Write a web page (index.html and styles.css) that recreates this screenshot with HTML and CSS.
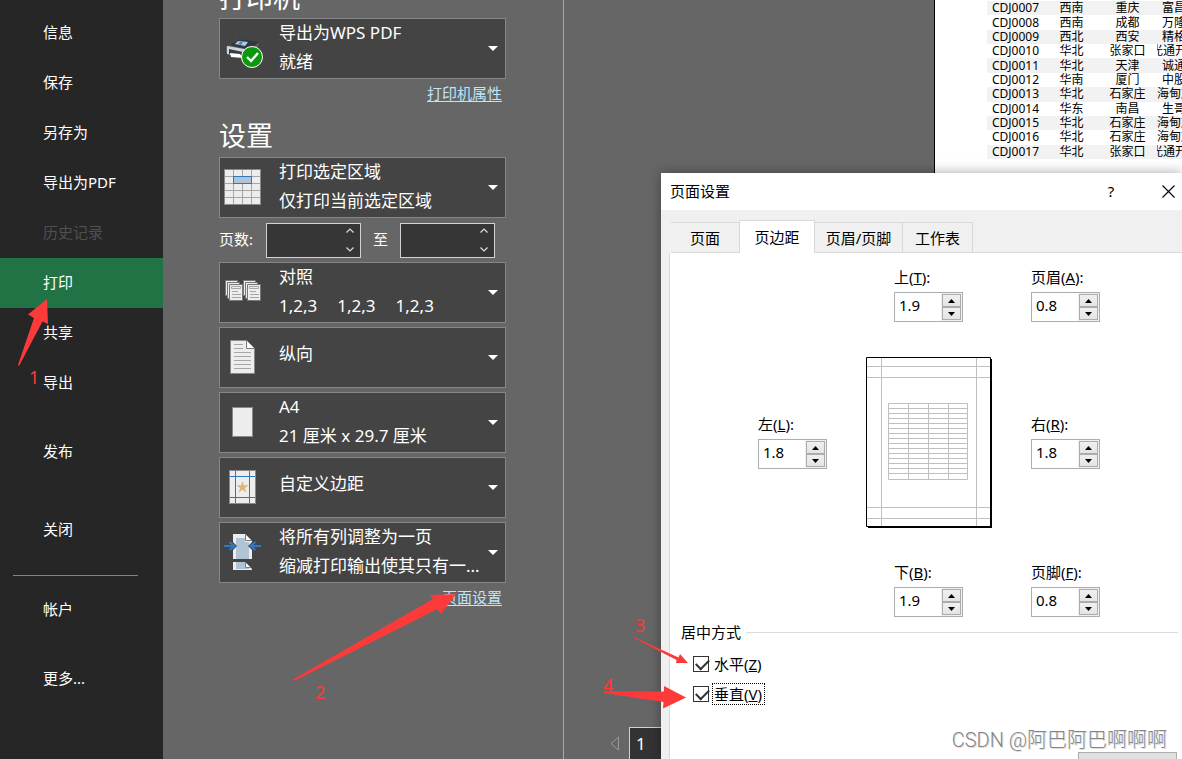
FILE: index.html
```html
<!DOCTYPE html>
<html lang="zh-CN">
<head>
<meta charset="utf-8">
<title>打印</title>
<link rel="stylesheet" href="styles.css">
</head>
<body>
<div class="app">
  <nav class="menu">
    <a class="menu-item" href="#info">信息</a>
    <a class="menu-item" href="#save">保存</a>
    <a class="menu-item" href="#save-as">另存为</a>
    <a class="menu-item" href="#pdf">导出为PDF</a>
    <a class="menu-item menu-disabled" aria-disabled="true" href="#history">历史记录</a>
    <a class="menu-item menu-active" aria-current="page" href="#print">打印</a>
    <a class="menu-item" href="#share">共享</a>
    <a class="menu-item" href="#export">导出</a>
    <a class="menu-item menu-publish" href="#publish">发布</a>
    <a class="menu-item menu-close" href="#close">关闭</a>
    <hr class="menu-rule">
    <a class="menu-item menu-account" href="#account">帐户</a>
    <a class="menu-item menu-more" href="#more">更多...</a>
  </nav>

  <main class="settings">
    <h2 class="heading heading-printer">打印机</h2>
    <button class="picker" type="button" aria-haspopup="listbox">
      <svg class="picker-icon" viewBox="0 0 40 39">
        <path d="M3 18 15 10 36 14 33 24 26 30 3 24z" fill="#5b6064"/>
        <path d="M6 16 16 10 36 13 27 21z" fill="#34383c"/>
        <path d="M15 12 25 13 22 17 12 15z" fill="#a9cdf0"/>
        <path d="M17 13 20 13 18 16 15 15z" fill="#4f82bd"/>
        <path d="M4 17 27 21 27 29 4 25z" fill="#d3d6d9"/>
        <path d="M6 20 20 23 20 27 6 25z" fill="#3a3d40"/>
        <path d="M7 24 17 25 20 29 8 28z" fill="#fff"/>
        <circle cx="29" cy="28" r="10.5" fill="#0b980f" stroke="#fff"/>
        <path d="M24 28 28 32 35 24" fill="none" stroke="#fff" stroke-width="2.4"/>
      </svg>
      <span class="picker-text"><span>导出为WPS PDF</span><span>就绪</span></span>
      <svg class="caret" viewBox="0 0 10 5"><path d="M0 0h10L5 5z" fill="#fff"/></svg>
    </button>
    <a class="link" href="#printer-props">打印机属性</a>

    <h2 class="heading">设置</h2>
    <div class="options">
      <button class="picker" type="button" aria-haspopup="listbox">
        <svg class="picker-icon" viewBox="0 0 40 39">
          <rect x="1.5" y="1.5" width="36" height="35" fill="#ededed" stroke="#8a8a8a"/>
          <path d="M10.5 2v34M19.5 2v34M28.5 2v34M2 8.5h35M2 15.5h35M2 22.5h35M2 29.5h35" fill="none" stroke="#a6a6a6"/>
          <rect x="10.5" y="8.5" width="18" height="7" fill="#b1c4d6" stroke="#2f77c0"/>
        </svg>
        <span class="picker-text"><span>打印选定区域</span><span>仅打印当前选定区域</span></span>
        <svg class="caret" viewBox="0 0 10 5"><path d="M0 0h10L5 5z" fill="#fff"/></svg>
      </button>

      <div class="pages">
        <label class="pages-label" for="from">页数:</label>
        <div class="dark-spin">
          <input id="from" type="text">
          <svg viewBox="0 0 8 24"><path d="M.5 4.5 4 1l3.500 3.500M.5 19.500 4 23l3.500-3.500" fill="none" stroke="#ddd" stroke-width="1.200"/></svg>
        </div>
        <label class="pages-to" for="to">至</label>
        <div class="dark-spin">
          <input id="to" type="text">
          <svg viewBox="0 0 8 24"><path d="M.5 4.5 4 1l3.500 3.500M.5 19.500 4 23l3.500-3.500" fill="none" stroke="#ddd" stroke-width="1.200"/></svg>
        </div>
      </div>

      <button class="picker" type="button" aria-haspopup="listbox">
        <svg class="picker-icon" viewBox="0 0 40 39">
          <g fill="#ededed" stroke="#777">
            <path d="M2.500 7.500h12v15h-12z"/><path d="M4.500 9.500h12v16h-12z"/><path d="M6.500 11.500h13v16h-13z"/>
            <path d="M20.500 7.500h12v15h-12z"/><path d="M22.500 9.500h12v16h-12z"/><path d="M24.500 11.500h13v16h-13z"/>
          </g>
          <path d="M8.500 13.500h9v2h-9zM26.500 13.500h9v2h-9zM9 18.500h6M9 21.500h9M9 24.500h9M27 18.500h6M27 21.500h9M27 24.500h9" fill="none" stroke="#a6a6a6"/>
        </svg>
        <span class="picker-text"><span>对照</span><span class="sets"><span>1,2,3</span><span>1,2,3</span><span>1,2,3</span></span></span>
        <svg class="caret" viewBox="0 0 10 5"><path d="M0 0h10L5 5z" fill="#fff"/></svg>
      </button>

      <button class="picker" type="button" aria-haspopup="listbox">
        <svg class="picker-icon" viewBox="0 0 40 39">
          <path d="M7.500 2.500h16l8 8v25h-24z" fill="#ededed" stroke="#8a8a8a"/>
          <path d="M23.500 2.500v8h8" fill="#fff" stroke="#777"/>
          <path d="M11 6.500h9M11 10.500h9M11 14.500h17M11 18.500h17M11 22.500h17M11 26.500h17M11 30.500h17" stroke="#a6a6a6"/>
        </svg>
        <span class="picker-text picker-single"><span>纵向</span></span>
        <svg class="caret" viewBox="0 0 10 5"><path d="M0 0h10L5 5z" fill="#fff"/></svg>
      </button>

      <button class="picker" type="button" aria-haspopup="listbox">
        <svg class="picker-icon" viewBox="0 0 40 39"><rect x="9.500" y="4.500" width="20" height="29" fill="#ededed" stroke="#8a8a8a"/></svg>
        <span class="picker-text"><span>A4</span><span>21 厘米 x 29.7 厘米</span></span>
        <svg class="caret" viewBox="0 0 10 5"><path d="M0 0h10L5 5z" fill="#fff"/></svg>
      </button>

      <button class="picker" type="button" aria-haspopup="listbox">
        <svg class="picker-icon" viewBox="0 0 40 39">
          <rect x="6.500" y="2.500" width="26" height="33" fill="#ededed" stroke="#8a8a8a"/>
          <path d="M12.500 3v32M26.500 3v32M7 8.500h25M7 29.500h25" stroke="#2f77c0"/>
          <path d="m19.500 13 1.500 4.300h4.500l-3.600 2.700 1.400 4.500-3.800-2.700-3.800 2.700 1.400-4.500-3.600-2.700h4.500z" fill="#deb679"/>
        </svg>
        <span class="picker-text picker-single"><span>自定义边距</span></span>
        <svg class="caret" viewBox="0 0 10 5"><path d="M0 0h10L5 5z" fill="#fff"/></svg>
      </button>

      <button class="picker" type="button" aria-haspopup="listbox">
        <svg class="picker-icon" viewBox="0 0 40 39">
          <path d="M10 1h12l7 7v18H10z" fill="#ededed"/>
          <path d="M13 5h9v4h4v17H13z" fill="#b1c4d6"/>
          <path d="M22.500 1.500v6h6" fill="#fff" stroke="#777"/>
          <path d="M10 29h12l7 7v1H10z" fill="#ededed"/>
          <path d="M13 29h9v6h4v1H13z" fill="#b1c4d6"/>
          <path d="M22.500 29.500v5h5" fill="#fff" stroke="#777"/>
          <path d="M9 8l5 5-5 5zM30 8l-5 5 5 5z" fill="#444"/>
          <path d="M1 13h10M6.500 9l5 4-5 4M38 13H28M32.500 9l-5 4 5 4" fill="none" stroke="#3079c4" stroke-width="2"/>
        </svg>
        <span class="picker-text"><span>将所有列调整为一页</span><span>缩减打印输出使其只有一...</span></span>
        <svg class="caret" viewBox="0 0 10 5"><path d="M0 0h10L5 5z" fill="#fff"/></svg>
      </button>
    </div>
    <a class="link" href="#page-setup">页面设置</a>
  </main>

  <section class="preview">
    <div class="sheet">
      <table class="rows">
        <colgroup><col class="col-code"><col class="col-area"><col class="col-city"><col></colgroup>
        <tbody>
          <tr><td>CDJ0007</td><td>西南</td><td>重庆</td><td class="name name-short">富昌</td></tr>
          <tr><td>CDJ0008</td><td>西南</td><td>成都</td><td class="name name-short">万隆</td></tr>
          <tr><td>CDJ0009</td><td>西北</td><td>西安</td><td class="name name-short">精格</td></tr>
          <tr><td>CDJ0010</td><td>华北</td><td>张家口</td><td class="name name-long">光通开</td></tr>
          <tr><td>CDJ0011</td><td>华北</td><td>天津</td><td class="name name-short">诚通</td></tr>
          <tr><td>CDJ0012</td><td>华南</td><td>厦门</td><td class="name name-short">中股</td></tr>
          <tr><td>CDJ0013</td><td>华北</td><td>石家庄</td><td class="name">海甸旅</td></tr>
          <tr><td>CDJ0014</td><td>华东</td><td>南昌</td><td class="name name-short">生哥</td></tr>
          <tr><td>CDJ0015</td><td>华北</td><td>石家庄</td><td class="name">海甸旅</td></tr>
          <tr><td>CDJ0016</td><td>华北</td><td>石家庄</td><td class="name">海甸旅</td></tr>
          <tr><td>CDJ0017</td><td>华北</td><td>张家口</td><td class="name name-long">光通开</td></tr>
        </tbody>
      </table>
    </div>
    <div class="pager">
      <button class="pager-prev" type="button" aria-label="上一页"><svg viewBox="0 0 9 15"><path d="M8.500 1v13L1 7.500z" fill="none" stroke="#999"/></svg></button>
      <input class="pager-page" type="text" aria-label="当前页" value="1">
    </div>

    <div class="dialog" role="dialog" aria-labelledby="dialog-title">
      <header class="titlebar">
        <h1 class="title" id="dialog-title">页面设置</h1>
        <button class="title-button" type="button">?</button>
        <button class="title-button" type="button" aria-label="关闭"><svg viewBox="0 0 13 13"><path d="M.5.5l12 12M12.500.5l-12 12" stroke="#000" stroke-width="1.100"/></svg></button>
      </header>
      <div class="tabs" role="tablist">
        <button class="tab tab-page" type="button" role="tab">页面</button>
        <button class="tab tab-active" type="button" role="tab" aria-selected="true">页边距</button>
        <button class="tab tab-header" type="button" role="tab">页眉/页脚</button>
        <button class="tab tab-sheet" type="button" role="tab">工作表</button>
      </div>
      <div class="panel">
        <div class="margins">
          <div class="field at-top"><label for="top">上(<u>T</u>):</label>
            <div class="spin"><input id="top" type="text" value="1.9"><span class="steps"><button type="button" aria-label="增加"><svg viewBox="0 0 7 4"><path d="M0 4h7L3.500 0z"/></svg></button><button type="button" aria-label="减少"><svg viewBox="0 0 7 4"><path d="M0 0h7L3.500 4z"/></svg></button></span></div></div>
          <div class="field at-header"><label for="header">页眉(<u>A</u>):</label>
            <div class="spin"><input id="header" type="text" value="0.8"><span class="steps"><button type="button" aria-label="增加"><svg viewBox="0 0 7 4"><path d="M0 4h7L3.500 0z"/></svg></button><button type="button" aria-label="减少"><svg viewBox="0 0 7 4"><path d="M0 0h7L3.500 4z"/></svg></button></span></div></div>
          <div class="field at-left"><label for="left">左(<u>L</u>):</label>
            <div class="spin"><input id="left" type="text" value="1.8"><span class="steps"><button type="button" aria-label="增加"><svg viewBox="0 0 7 4"><path d="M0 4h7L3.500 0z"/></svg></button><button type="button" aria-label="减少"><svg viewBox="0 0 7 4"><path d="M0 0h7L3.500 4z"/></svg></button></span></div></div>
          <svg class="page-sketch" viewBox="0 0 126 171">
            <path d="M2 2h124v169H2z"/>
            <path d="M.5.5h124v169H.5z" fill="#fff" stroke="#000"/>
            <path d="M15.500 1v168M110.500 1v168M1 9.500h123M1 20.500h123M1 150.500h123M1 161.500h123" stroke="#bfbfbf"/>
            <path d="M22.500 46.500h79v76h-79zM42.500 46v76M62.500 46v76M82.500 46v76M22 51.500h80M22 56.500h80M22 61.500h80M22 66.500h80M22 71.500h80M22 76.500h80M22 81.500h80M22 86.500h80M22 91.500h80M22 96.500h80M22 101.500h80M22 106.500h80M22 111.500h80M22 116.500h80" fill="none" stroke="#bfbfbf"/>
          </svg>
          <div class="field at-right"><label for="right">右(<u>R</u>):</label>
            <div class="spin"><input id="right" type="text" value="1.8"><span class="steps"><button type="button" aria-label="增加"><svg viewBox="0 0 7 4"><path d="M0 4h7L3.500 0z"/></svg></button><button type="button" aria-label="减少"><svg viewBox="0 0 7 4"><path d="M0 0h7L3.500 4z"/></svg></button></span></div></div>
          <div class="field at-bottom"><label for="bottom">下(<u>B</u>):</label>
            <div class="spin"><input id="bottom" type="text" value="1.9"><span class="steps"><button type="button" aria-label="增加"><svg viewBox="0 0 7 4"><path d="M0 4h7L3.500 0z"/></svg></button><button type="button" aria-label="减少"><svg viewBox="0 0 7 4"><path d="M0 0h7L3.500 4z"/></svg></button></span></div></div>
          <div class="field at-footer"><label for="footer">页脚(<u>F</u>):</label>
            <div class="spin"><input id="footer" type="text" value="0.8"><span class="steps"><button type="button" aria-label="增加"><svg viewBox="0 0 7 4"><path d="M0 4h7L3.500 0z"/></svg></button><button type="button" aria-label="减少"><svg viewBox="0 0 7 4"><path d="M0 0h7L3.500 4z"/></svg></button></span></div></div>
        </div>
        <div class="group" role="group" aria-labelledby="center-title">
          <div class="group-title" id="center-title">居中方式</div>
          <div class="check"><input id="horizontal" type="checkbox" checked><label for="horizontal">水平(<u>Z</u>)</label></div>
          <div class="check"><input id="vertical" type="checkbox" checked><label class="focused" for="vertical">垂直(<u>V</u>)</label></div>
        </div>
        <button class="dialog-button" type="button" aria-label="选项"></button>
      </div>
    </div>
  </section>

  <svg class="notes">
    <path d="M47 299 28 314.500 34 318 18 365 19 366 42.500 321.500 48 324z"/>
    <path d="M456 594 430 595 433 599 293 679.500 294 681 437.500 609 441 614z"/>
    <path d="M688 663 680 654 678.500 657.500 634 637 634 638 676.500 660 676 663z"/>
    <path d="M686 697.500 664 686V691.500L604 691.500V693L663.500 702 663 708.500z"/>
    <text x="29" y="384">1</text>
    <text x="315" y="699">2</text>
    <text x="635" y="632">3</text>
    <text x="603" y="692">4</text>
  </svg>
  <div class="watermark">CSDN @阿巴阿巴啊啊啊</div>
</div>
</body>
</html>
```

FILE: styles.css
```css
* {
  box-sizing: border-box;
}

body {
  margin: 0;
  font-family: "Noto Sans", "Noto Sans CJK SC", sans-serif;
  font-size: 15px;
  line-height: 20px;
}

button,
input {
  margin: 0;
  padding: 0;
  font: inherit;
  color: inherit;
}

svg {
  display: block;
}

.app {
  position: relative;
  display: grid;
  grid-template-columns: 163px 401px 1fr;
  height: 100vh;
  overflow: hidden;
  background: #666;
  color: #fff;
}

/* Left menu */

.menu {
  display: flex;
  flex-direction: column;
  padding-top: 8px;
  background: #262626;
}

.menu-item {
  flex: none;
  height: 50px;
  padding-left: 43px;
  line-height: 48px;
  color: #fff;
  text-decoration: none;
}

.menu-disabled {
  color: #505050;
}

.menu-active {
  background: #217346;
}

.menu-publish,
.menu-more {
  margin-top: 19px;
}

.menu-close {
  margin-top: 28px;
}

.menu-rule {
  width: 125px;
  height: 1px;
  margin: 20px 0 0 13px;
  border: 0;
  background: #858585;
}

.menu-account {
  margin-top: 9px;
}

/* Print settings */

.settings {
  display: flex;
  flex-direction: column;
  padding: 0 57px 0 56px;
  border-right: 1px solid #a8a8a8;
}

.heading {
  margin: 15px 0 2px;
  font-size: 27px;
  font-weight: 400;
  line-height: 36px;
}

.heading-printer {
  margin-top: -20px;
}

.picker {
  display: flex;
  align-items: center;
  width: 100%;
  height: 61px;
  padding: 0 7px 0 3px;
  border: 1px solid #868686;
  background: #444;
  text-align: left;
}

.picker-icon {
  flex: none;
  width: 40px;
  height: 39px;
}

.picker-text {
  display: flex;
  flex: 1;
  flex-direction: column;
  padding: 0 0 3px 16px;
  font-size: 17px;
  line-height: 29px;
  white-space: nowrap;
}

.picker-single {
  padding-bottom: 8px;
}

.sets {
  display: flex;
  gap: 20px;
}

.caret {
  flex: none;
  width: 10px;
  height: 5px;
}

.link {
  align-self: flex-end;
  margin: 4px 4px 0 0;
  color: #bfe3f8;
  text-underline-offset: 2px;
}

.options {
  display: flex;
  flex-direction: column;
  gap: 4px;
  padding-top: 1px;
}

.pages {
  display: flex;
  align-items: center;
  height: 36px;
}

.pages-label,
.pages-to {
  padding-bottom: 2px;
}

.pages-label {
  width: 47px;
}

.pages-to {
  width: 39px;
  text-align: center;
}

.dark-spin {
  display: flex;
  align-items: center;
  width: 95px;
  height: 35px;
  padding-right: 6px;
  border: 1px solid #d2d2d2;
  background: #363636;
}

.dark-spin input {
  flex: 1;
  min-width: 0;
  height: 100%;
  padding-left: 6px;
  border: 0;
  background: transparent;
}

.dark-spin svg {
  width: 8px;
  height: 24px;
}

/* Preview */

.preview {
  position: relative;
  display: flex;
  flex-direction: column;
  min-width: 0;
}

.sheet {
  flex: 1;
  min-height: 0;
  margin-left: 370px;
  padding: 1px 0 0 52px;
  overflow: hidden;
  border-left: 1px solid #000;
  background: #fff;
  color: #000;
}

.rows {
  width: 100%;
  height: 158px;
  table-layout: fixed;
  border-collapse: collapse;
  font-size: 12px;
  line-height: 14px;
}

.col-code {
  width: 58px;
}

.col-area {
  width: 53px;
}

.col-city {
  width: 59px;
}

.rows td {
  height: 14px;
  padding: 0;
  overflow: hidden;
  text-align: center;
  white-space: nowrap;
}

.rows td:first-child {
  padding-left: 5px;
  text-align: left;
}

.rows .name {
  text-align: left;
}

.rows .name-short {
  padding-left: 5px;
}

.rows .name-long {
  text-indent: -6px;
}

.rows tr:nth-child(odd) {
  background: #f2f2f2;
}

.pager {
  display: flex;
  align-items: center;
  height: 32px;
  padding-left: 46px;
}

.pager-prev {
  width: 19px;
  border: 0;
  background: transparent;
}

.pager-prev svg {
  width: 9px;
  height: 15px;
}

.pager-page {
  width: 60px;
  height: 36px;
  margin-top: 4px;
  padding: 0 0 3px 6px;
  border: 1px solid #d2d2d2;
  background: #333;
  font-size: 17px;
}

/* Page setup dialog */

.dialog {
  position: absolute;
  top: 173px;
  right: 0;
  bottom: 0;
  left: 97px;
  display: flex;
  flex-direction: column;
  background: #f0f0f0;
  color: #000;
  box-shadow: 0 0 12px rgba(0, 0, 0, 0.35);
  overflow: hidden;
}

.titlebar {
  display: flex;
  flex: none;
  align-items: center;
  height: 37px;
  padding-left: 9px;
  background: #fff;
}

.title {
  flex: 1;
  margin: 0;
  padding-bottom: 2px;
  font-size: 15px;
  font-weight: 400;
}

.title-button {
  display: grid;
  place-items: center;
  width: 28px;
  height: 36px;
  border: 0;
  background: transparent;
}

.title-button:nth-of-type(1) {
  margin-right: 29px;
  padding-bottom: 2px;
}

.title-button svg {
  width: 13px;
  height: 13px;
}

.tabs {
  display: flex;
  flex: none;
  align-items: flex-end;
  height: 43px;
  padding-left: 10px;
}

.tab {
  height: 31px;
  border: 1px solid #d9d9d9;
  border-left: 0;
  background: #f0f0f0;
}

.tab-page {
  width: 68px;
  border-right: 0;
}

.tab-active {
  width: 76px;
  height: 33px;
  border: 1px solid #d9d9d9;
  border-bottom: 0;
  background: #fff;
}

.tab-header {
  width: 88px;
}

.tab-sheet {
  width: 70px;
}

.tabs::after {
  flex: 1;
  height: 1px;
  background: #d9d9d9;
  content: "";
}

.panel {
  display: flex;
  flex: 1;
  flex-direction: column;
  min-height: 0;
  margin-left: 8px;
  padding-right: 4px;
  border-left: 1px solid #d9d9d9;
  background: #fff;
}

.margins {
  display: grid;
  flex: none;
  grid-template-columns: 69px 126px 69px;
  gap: 35px 39px;
  align-items: center;
  padding: 15px 0 0 88px;
}

.at-top,
.at-bottom {
  grid-column: 2;
  margin-left: 28px;
}

.at-header,
.at-right,
.at-footer {
  grid-column: 3;
}

.at-left {
  grid-column: 1;
}

.at-left,
.at-right {
  padding-bottom: 1px;
}

.field {
  width: 69px;
}

.field label {
  display: block;
  height: 24px;
  line-height: 18px;
  white-space: nowrap;
}

.spin {
  display: flex;
  height: 30px;
  border: 1px solid #abadb3;
  background: #fff;
}

.spin input {
  flex: 1;
  min-width: 0;
  padding: 0 0 5px 4px;
  border: 0;
  background: transparent;
}

.steps {
  display: flex;
  flex-direction: column;
  width: 21px;
  padding: 1px;
  background: #f0f0f0;
}

.steps button {
  display: grid;
  flex: 1;
  place-items: center;
  min-height: 0;
  border: 1px solid #acacac;
  background: linear-gradient(#f0f0f0, #e4e4e4);
}

.steps svg {
  width: 7px;
  height: 4px;
}

.page-sketch {
  width: 126px;
  height: 171px;
}

.group {
  flex: none;
  padding: 5px 0 0 11px;
}

.group-title {
  display: flex;
  align-items: center;
  gap: 5px;
  height: 20px;
}

.group-title::after {
  flex: 1;
  height: 1px;
  background: #dcdcdc;
  content: "";
}

.check {
  display: flex;
  align-items: center;
  gap: 3px;
  height: 24px;
  margin: 10px 0 0 12px;
}

.check + .check {
  margin-top: 6px;
}

.check input {
  width: 16px;
  height: 16px;
  border: 1px solid #333;
  background: #fff;
  appearance: none;
}

.check input:checked::before {
  display: block;
  width: 11px;
  height: 6px;
  margin: 2px 0 0 2px;
  border: solid #333;
  border-width: 0 0 2px 2px;
  transform: rotate(-45deg);
  content: "";
}

.check label {
  height: 22px;
  padding: 0 2px 0 1px;
  border: 1px solid transparent;
}

.check .focused {
  border: 1px dotted #000;
}

.dialog-button {
  flex: none;
  align-self: flex-end;
  width: 99px;
  height: 30px;
  margin: 46px 1px 0 0;
  border: 1px solid #adadad;
  background: #e1e1e1;
}

/* Annotations */

.notes {
  position: absolute;
  inset: 0;
  width: 100%;
  height: 100%;
  fill: #fc3a39;
  font-size: 18px;
  pointer-events: none;
}

.watermark {
  position: absolute;
  right: 15px;
  bottom: 6px;
  color: #858585;
  font-family: Roboto, "Noto Sans CJK SC", sans-serif;
  font-size: 20px;
  font-weight: 300;
  line-height: 26px;
  text-shadow: 1px 1px 0 #ddd;
}
```
